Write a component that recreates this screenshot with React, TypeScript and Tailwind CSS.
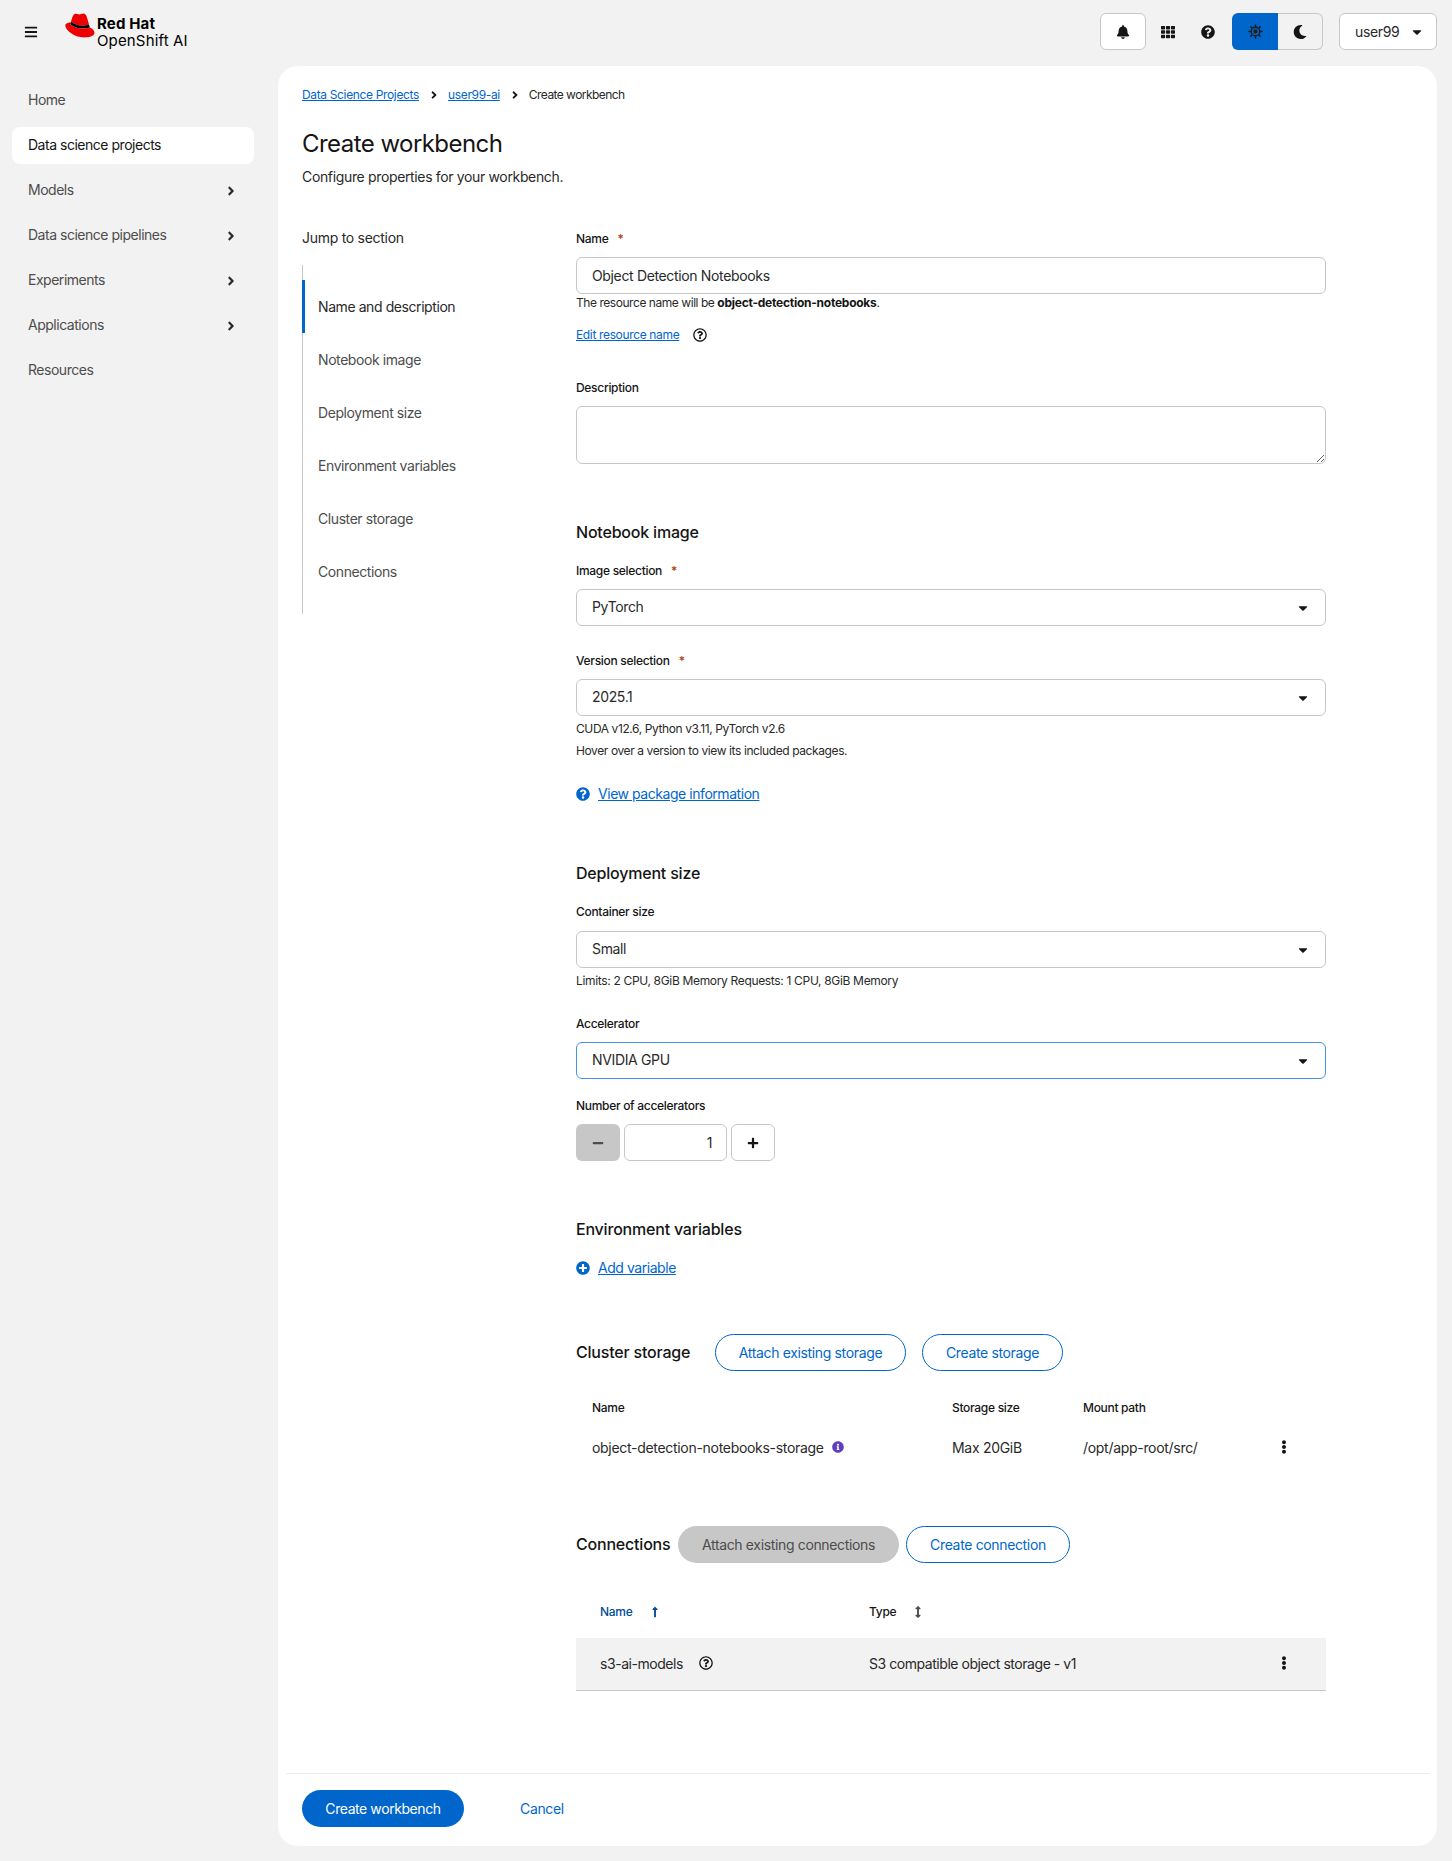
import { ReactNode } from 'react';
import {
  FaAngleRight,
  FaArrowsAltV,
  FaBars,
  FaBell,
  FaCaretDown,
  FaEllipsisV,
  FaInfoCircle,
  FaLongArrowAltUp,
  FaMinus,
  FaMoon,
  FaPlus,
  FaPlusCircle,
  FaQuestionCircle,
  FaRegQuestionCircle,
  FaTh,
} from 'react-icons/fa';

const navItems = [
  { label: 'Home' },
  { label: 'Data science projects', active: true },
  { label: 'Models', more: true },
  { label: 'Data science pipelines', more: true },
  { label: 'Experiments', more: true },
  { label: 'Applications', more: true },
  { label: 'Resources' },
];

const jumpItems = ['Name and description', 'Notebook image', 'Deployment size', 'Environment variables', 'Cluster storage', 'Connections'];

function RedHatLogo() {
  return (
    <svg viewBox="0 0 30 26" className="w-[30px] h-[26px]">
      <path d="M9.2 1.2C10.500.2 12.500 1.400 14.200 1.400 15.600 1.400 17 .2 18.800.4 20.500.6 21.500 2.500 22.300 5.500L24 11.500C20.500 13 15.500 13 11.800 11.700 9.400 10.900 7 9.800 6 8.800 6.600 6 7.800 2.500 9.200 1.200z" fill="#ee0000" />
      <path d="M6 8.800C7 9.800 9.400 10.900 11.800 11.700 15.500 13 20.500 13 24 11.500L24.900 14.400C20.500 16 15 15.800 11 14.400 8.500 13.500 6.200 12 5 10.900z" fill="#000" />
      <path d="M5.200 9.300C3 9.700.3 10.500.3 12.600.3 17 8.800 24.500 19 24.500 25.200 24.500 29.500 22.800 29.500 19.800 29.500 17.600 27.500 15.600 24.900 14.400 20.500 16 15 15.800 11 14.400 8.500 13.500 6.200 12 5 10.900z" fill="#ee0000" />
    </svg>
  );
}

function SunIcon() {
  return (
    <svg viewBox="0 0 16 16" className="w-[15px] h-[15px]" fill="none" stroke="#1f1f1f">
      <circle cx="8" cy="8" r="4.600" strokeWidth="1.500" />
      <circle cx="8" cy="8" r="2.300" fill="#1f1f1f" stroke="none" />
      <path strokeWidth="1.700" d="M8 .4v3M8 12.600v3M.4 8h3M12.600 8h3M2.600 2.600l2 2M11.400 11.400l2 2M13.400 2.600l-2 2M4.600 11.400l-2 2" />
    </svg>
  );
}

function Label({ children, required, className }: { children: ReactNode; required?: boolean; className: string }) {
  return (
    <div className={`text-[12px] leading-[18px] tracking-[-0.3px] font-medium text-[#151515] ${className}`}>
      {children}
      {required && <span className="ml-[9px] text-[#b1380b]">*</span>}
    </div>
  );
}

function Select({ value, focused, className }: { value: string; focused?: boolean; className: string }) {
  return (
    <div
      className={`h-[37px] flex items-center justify-between pl-[15px] pr-[15px] rounded-md border text-[14px] text-[#292929] ${
        focused ? 'border-[#4394e5]' : 'border-[#c7c7c7]'
      } ${className}`}
    >
      <span className="pb-[2px]">{value}</span>
      <FaCaretDown size={14} className="text-[#151515]" />
    </div>
  );
}

function Help({ children, className }: { children: ReactNode; className: string }) {
  return <div className={`text-[12px] leading-[18px] tracking-[-0.4px] text-[#292929] ${className}`}>{children}</div>;
}

function Heading({ children, className }: { children: ReactNode; className: string }) {
  return <h2 className={`text-[16px] leading-[24px] tracking-[-0.2px] font-medium text-[#151515] ${className}`}>{children}</h2>;
}

function PillButton({ children, className }: { children: ReactNode; className: string }) {
  return (
    <button className={`h-[37px] flex items-center justify-center rounded-full border border-[#0066cc] text-[14px] text-[#0066cc] ${className}`}>
      {children}
    </button>
  );
}

export default function App() {
  return (
    <div className="h-[1861px] bg-[#f2f2f2] text-[#151515] tracking-[-0.35px] flex flex-col overflow-hidden font-['Inter','Noto_Sans',sans-serif]">
      {/* masthead */}
      <header className="h-[66px] pb-[3px] pl-[24px] pr-[15px] flex items-center shrink-0">
        <FaBars size={14} className="text-[#151515]" />
        <div className="ml-[27px] mr-[2px] mb-[11px]">
          <RedHatLogo />
        </div>
        <div className="flex flex-col text-[15px] leading-[17px] tracking-[0.15px] text-black">
          <span className="font-bold">Red Hat</span>
          <span>OpenShift AI</span>
        </div>
        <div className="ml-auto flex items-center">
          <button className="w-[46px] h-[37px] flex items-center justify-center bg-white rounded-md border border-[#c7c7c7]">
            <FaBell size={14} />
          </button>
          <div className="w-[44px] flex justify-center">
            <FaTh size={14} />
          </div>
          <div className="w-[35px] flex justify-center">
            <FaQuestionCircle size={14} />
          </div>
          <div className="ml-[7px] flex h-[37px]">
            <div className="w-[46px] bg-[#0066cc] rounded-l-md flex items-center justify-center">
              <SunIcon />
            </div>
            <div className="w-[45px] rounded-r-md border border-l-0 border-[#c7c7c7] flex items-center justify-center">
              <FaMoon size={14} />
            </div>
          </div>
          <button className="ml-[16px] w-[98px] h-[37px] pl-[15px] flex items-center gap-[11px] bg-white rounded-md border border-[#c7c7c7] text-[14px] text-[#292929]">
            user99
            <FaCaretDown size={14} className="text-[#151515]" />
          </button>
        </div>
      </header>

      <div className="flex flex-1 pb-[15px] min-h-0">
        {/* sidebar */}
        <nav className="w-[278px] shrink-0 pl-[12px] pr-[24px] pt-[16px] flex flex-col gap-[8px]">
          {navItems.map((item) => (
            <div
              key={item.label}
              className={`h-[37px] pl-[16px] pr-[16px] flex items-center justify-between rounded-lg text-[14px] tracking-[-0.48px] ${
                item.active ? 'bg-white text-[#151515]' : 'text-[#4d4d4d]'
              }`}
            >
              <span className="pb-[2px]">{item.label}</span>
              {item.more && <FaAngleRight size={14} className="text-[#292929]" />}
            </div>
          ))}
        </nav>

        {/* main panel */}
        <main className="w-[1159px] bg-white rounded-[20px] flex flex-col">
          <div className="flex-1 px-[24px] pt-[20px]">
            <div className="flex items-center text-[12px] leading-[18px] tracking-[-0.35px]">
              <a className="text-[#0066cc] underline">Data Science Projects</a>
              <FaAngleRight size={12} className="ml-[9px] mr-[8px] text-[#151515]" />
              <a className="text-[#0066cc] underline">user99-ai</a>
              <FaAngleRight size={12} className="ml-[9px] mr-[8px] text-[#151515]" />
              <span className="text-[#292929] tracking-[-0.55px]">Create workbench</span>
            </div>
            <h1 className="mt-[24px] text-[24px] leading-[32px] tracking-[-0.55px] text-[#151515]">Create workbench</h1>
            <p className="mt-[7px] text-[14px] leading-[20px] text-[#292929]">Configure properties for your workbench.</p>

            <div className="mt-[41px] flex">
              {/* jump links */}
              <aside className="w-[274px] shrink-0">
                <div className="text-[14px] leading-[20px] tracking-[-0.28px] text-[#292929]">Jump to section</div>
                <div className="mt-[17px] border-l border-[#c7c7c7] pt-[15px] pb-[16px]">
                  {jumpItems.map((item, i) => (
                    <div
                      key={item}
                      className={`h-[53px] flex items-center text-[14px] tracking-[-0.42px] ${
                        i === 0 ? '-ml-px pl-[13px] border-l-[3px] border-[#0066cc] text-[#292929]' : 'pl-[15px] text-[#4d4d4d]'
                      }`}
                    >
                      {item}
                    </div>
                  ))}
                </div>
              </aside>

              {/* form */}
              <section className="w-[750px] pt-[2px]">
                <Label required className="">Name</Label>
                <input
                  readOnly
                  value="Object Detection Notebooks"
                  className="mt-[9px] w-full h-[37px] px-[15px] pb-px rounded-md border border-[#c7c7c7] text-[14px] text-[#292929] outline-none"
                />
                <Help className="">
                  <span className="tracking-[-0.45px]">The resource name will be </span>
                  <b className="font-bold tracking-[-0.25px] text-[#151515]">object-detection-notebooks</b>.
                </Help>
                <div className="mt-[14px] flex items-center text-[12px] leading-[18px] tracking-[-0.35px]">
                  <a className="text-[#0066cc] underline">Edit resource name</a>
                  <FaRegQuestionCircle size={14} className="ml-[14px] text-[#151515]" />
                </div>
                <Label className="mt-[35px]">Description</Label>
                <textarea readOnly className="block mt-[9px] w-full h-[58px] rounded-md border border-[#c7c7c7] outline-none" />

                <Heading className="mt-[56px]">Notebook image</Heading>
                <Label required className="mt-[18px]">Image selection</Label>
                <Select value="PyTorch" className="mt-[9px]" />
                <Label required className="mt-[26px]">Version selection</Label>
                <Select value="2025.1" className="mt-[9px]" />
                <Help className="mt-[4px]">CUDA v12.6, Python v3.11, PyTorch v2.6</Help>
                <Help className="mt-[4px]">Hover over a version to view its included packages.</Help>
                <div className="mt-[24px] flex items-center gap-[8px] text-[14px] leading-[20px] tracking-[-0.45px] text-[#0066cc]">
                  <FaQuestionCircle size={14} />
                  <a className="underline">View package information</a>
                </div>

                <Heading className="mt-[57px]">Deployment size</Heading>
                <Label className="mt-[18px]">Container size</Label>
                <Select value="Small" className="mt-[10px]" />
                <Help className="mt-[4px] tracking-[-0.33px]">Limits: 2 CPU, 8GiB Memory Requests: 1 CPU, 8GiB Memory</Help>
                <Label className="mt-[25px]">Accelerator</Label>
                <Select value="NVIDIA GPU" focused className="mt-[9px]" />
                <Label className="mt-[18px]">Number of accelerators</Label>
                <div className="mt-[9px] flex gap-[4px]">
                  <button className="w-[44px] h-[37px] flex items-center justify-center rounded-md bg-[#c7c7c7] text-[#4d4d4d]">
                    <FaMinus size={12} />
                  </button>
                  <div className="w-[103px] h-[37px] flex items-center justify-end pr-[14px] rounded-md border border-[#c7c7c7] text-[14px] text-[#292929]">1</div>
                  <button className="w-[44px] h-[37px] flex items-center justify-center rounded-md border border-[#c7c7c7]">
                    <FaPlus size={12} />
                  </button>
                </div>

                <Heading className="mt-[56px]">Environment variables</Heading>
                <div className="mt-[17px] flex items-center gap-[8px] text-[14px] leading-[20px] tracking-[-0.45px] text-[#0066cc]">
                  <FaPlusCircle size={14} />
                  <a className="underline">Add variable</a>
                </div>

                <div className="mt-[56px] flex items-center">
                  <Heading className="w-[139px] pb-[2px]">Cluster storage</Heading>
                  <PillButton className="w-[191px]">Attach existing storage</PillButton>
                  <PillButton className="ml-[16px] w-[141px]">Create storage</PillButton>
                </div>
                <div className="mt-[28px] pl-[16px] flex text-[12px] leading-[18px] tracking-[-0.3px] font-medium text-[#151515]">
                  <span className="w-[360px]">Name</span>
                  <span className="w-[130px]">Storage size</span>
                  <span className="ml-px">Mount path</span>
                </div>
                <div className="mt-[20px] pl-[16px] h-[20px] flex items-center text-[14px] tracking-[-0.3px] text-[#292929]">
                  <span className="w-[360px] flex items-center gap-[8px]">
                    object-detection-notebooks-storage
                    <FaInfoCircle size={12} className="text-[#5e40be]" />
                  </span>
                  <span className="w-[131px]">Max 20GiB</span>
                  <span className="w-[194px]">/opt/app-root/src/</span>
                  <FaEllipsisV size={14} className="text-[#151515]" />
                </div>

                <div className="mt-[69px] flex items-center">
                  <Heading className="w-[102px] pb-[2px]">Connections</Heading>
                  <button className="w-[221px] h-[37px] rounded-full bg-[#c7c7c7] text-[14px] text-[#4d4d4d]">Attach existing connections</button>
                  <PillButton className="ml-[7px] w-[164px]">Create connection</PillButton>
                </div>
                <div className="mt-[40px] pl-[24px] flex text-[12px] leading-[18px] tracking-[-0.3px] font-medium">
                  <span className="w-[269px] flex items-center gap-[17px] text-[#004d99]">
                    Name
                    <FaLongArrowAltUp size={12} />
                  </span>
                  <span className="flex items-center gap-[16px] text-[#151515]">
                    Type
                    <FaArrowsAltV size={12} className="text-[#4d4d4d]" />
                  </span>
                </div>
                <div className="mt-[17px] h-[53px] pl-[24px] pb-[2px] flex items-center bg-[#f2f2f2] border-b border-[#c7c7c7] text-[14px] tracking-[-0.45px] text-[#292929]">
                  <span className="w-[269px] flex items-center gap-[16px]">
                    s3-ai-models
                    <FaRegQuestionCircle size={14} className="text-[#151515]" />
                  </span>
                  <span className="w-[408px]">S3 compatible object storage - v1</span>
                  <FaEllipsisV size={14} className="text-[#151515]" />
                </div>
              </section>
            </div>
          </div>

          {/* footer */}
          <div className="h-[73px] mx-[8px] pl-[16px] border-t border-[#ebebeb] flex items-start pt-[16px]">
            <button className="w-[162px] h-[37px] pb-px rounded-full bg-[#0066cc] text-white text-[14px] tracking-[-0.42px]">Create workbench</button>
            <button className="ml-[56px] h-[37px] pb-px text-[14px] text-[#0066cc]">Cancel</button>
          </div>
        </main>
      </div>
    </div>
  );
}
